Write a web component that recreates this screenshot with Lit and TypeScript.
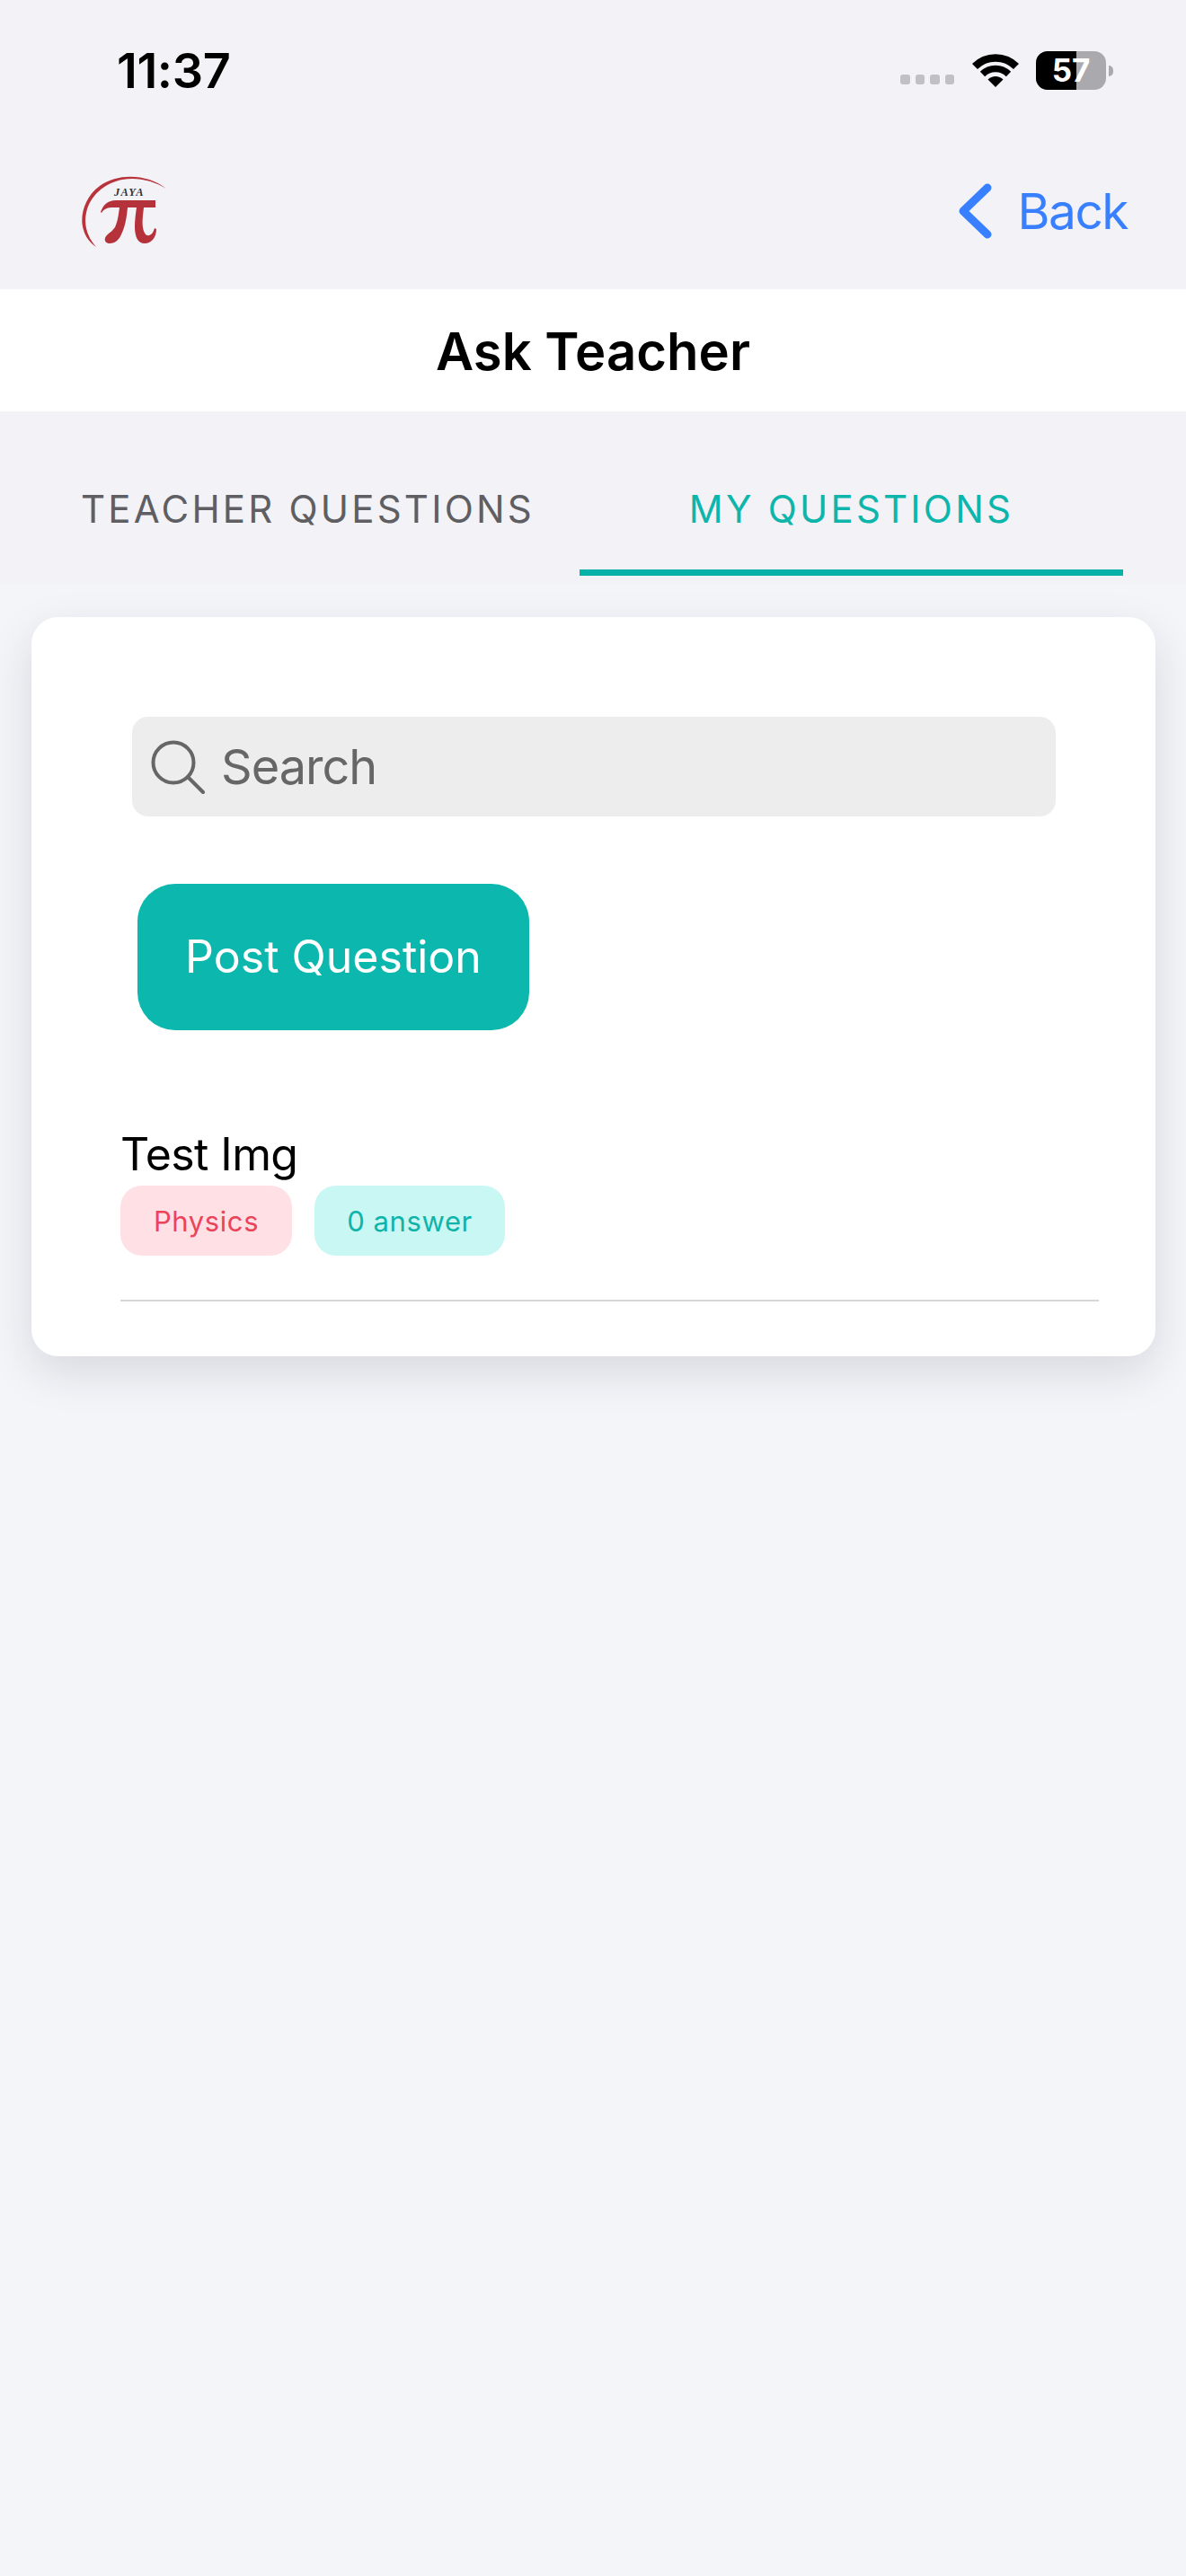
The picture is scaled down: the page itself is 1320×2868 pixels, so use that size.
import { LitElement, html, css } from "lit";
import { customElement } from "lit/decorators.js";

@customElement("app-root")
export class AppRoot extends LitElement {
  static styles = css`
    :host { display: block; width: 1320px; height: 2868px; background: #f4f5f9; font-family: Inter, "Noto Sans", sans-serif; color: #000; overflow: hidden; }
    * { box-sizing: border-box; }
    .top { background: #f2f2f7; height: 322px; }
    .status { height: 156px; display: flex; align-items: center; padding: 0 81px 0 130px; }
    .time { font-size: 54px; font-weight: 600; letter-spacing: -0.4px; line-height: 1; margin-top: 1px; }
    .status-right { margin-left: auto; display: flex; align-items: center; margin-top: 1px; }
    .dots { display: flex; gap: 6px; margin-top: 20px; margin-right: 20px; }
    .dot { width: 10.5px; height: 10.5px; border-radius: 3px; background: #c1c1c4; }
    .wifi { display: block; width: 52px; height: 39px; margin-right: 19px; }
    .battery { position: relative; width: 78px; height: 43px; border-radius: 13px; background: #a9a9ae; overflow: hidden; display: flex; align-items: center; justify-content: center; color: #fff; font-size: 35px; font-weight: 700; line-height: 1; }
    .battery-fill { position: absolute; left: 0; top: 0; bottom: 0; width: 45px; background: #000; }
    .battery-num { position: relative; }
    .nub { width: 5px; height: 12px; margin-left: 3px; background: #a9a9ae; border-radius: 0 6px 6px 0; }
    .nav { height: 166px; display: flex; align-items: center; justify-content: space-between; padding: 0 65px 8px 85px; }
    .logo { display: block; width: 105px; height: 90px; }
    .logo-text { font-family: "Liberation Serif", serif; font-style: italic; font-weight: 700; font-size: 12.5px; letter-spacing: 1.2px; fill: #333; }
    .back { display: flex; align-items: center; gap: 29px; color: #3880ff; font-size: 55px; letter-spacing: -1.5px; line-height: 1; }
    .chev { display: block; width: 38px; height: 62px; }
    .title { height: 136px; padding-top: 2px; background: #fff; display: flex; align-items: center; justify-content: center; font-size: 58px; font-weight: 600; }
    .tabs { height: 192px; background: #f2f2f7; display: flex; padding: 0 70px 0 40px; }
    .tab { flex: 1; display: flex; align-items: flex-start; justify-content: center; padding-top: 88px; height: 183px; font-size: 42px; letter-spacing: 3.2px; color: #5f5f63; line-height: 1; }
    .tab.active { color: #0db5ab; border-bottom: 7px solid #08b2a8; }
    .card { margin: 37px 34px 0 35px; height: 823px; background: #fff; border-radius: 30px; box-shadow: 0 18px 50px rgba(30, 30, 50, 0.13); padding: 111px 111px 0 112px; }
    .search { height: 111px; background: #ededed; border-radius: 18px; display: flex; align-items: center; padding-left: 21px; gap: 18px; color: #666; font-size: 54px; font-weight: 400; letter-spacing: -1px; }
    .search svg { display: block; width: 60px; height: 60px; }
    .btn { margin: 75px 0 0 6px; width: 436px; height: 163px; padding-bottom: 2px; border-radius: 42px; background: #0cb7ae; color: #fff; display: flex; align-items: center; justify-content: center; font-size: 50px; font-weight: 400; }
    .item { margin: 108px -48px 0 -13px; height: 194px; border-bottom: 2px solid #d6d6d9; }
    .item-title { font-size: 50px; line-height: 60px; letter-spacing: -0.6px; }
    .tags { display: flex; gap: 25px; margin-top: 5px; }
    .tag { height: 78px; border-radius: 24px; display: flex; align-items: center; justify-content: center; font-size: 31px; letter-spacing: 0.6px; }
    .tag.red { width: 191px; background: #ffe0e5; color: #eb445a; }
    .tag.teal { width: 212px; background: #c8f7f4; color: #0fb3a9; }
  `;

  render() {
    return html`
      <div class="top">
        <div class="status">
          <div class="time">11:37</div>
          <div class="status-right">
            <div class="dots"><div class="dot"></div><div class="dot"></div><div class="dot"></div><div class="dot"></div></div>
            <svg class="wifi" viewBox="0 0 52 39">
              <path d="M3 15 A32.5 32.5 0 0 1 49 15" fill="none" stroke="#000" stroke-width="8.5"/>
              <path d="M11.5 23.5 A20.5 20.5 0 0 1 40.5 23.5" fill="none" stroke="#000" stroke-width="7.5"/>
              <path d="M26 38 L17.5 29.5 A12 12 0 0 1 34.500 29.5 Z" fill="#000"/>
            </svg>
            <div class="battery"><div class="battery-fill"></div><span class="battery-num">57</span></div>
            <div class="nub"></div>
          </div>
        </div>
        <div class="nav">
          <svg class="logo" viewBox="85 190 105 90">
            <path d="M185 210 C165 194 132 192 111 207 C94 219 88 242 93 256 C95 264 101 271 107 275 C97 264 93 250 96 237 C100 218 116 204 136 200 C153 197 170 201 185 210 Z" fill="#b9333b"/>
            <text class="logo-text" x="127" y="218">JAYA</text>
            <path d="M112 236 C115 228 120 223 129 223 L173 223 L173 231 L160 231 C159 240 158 248 159 253 C160 260 163 263 166 262 C169 261 171 258 172 254 L174 255 C174 265 168 271 161 271 C153 271 150 263 150 252 C150 245 151 238 152 231 L142 231 C141 243 139 253 135 261 C132 268 127 271 122 271 C118 271 116 268 117 265 C118 261 124 259 128 253 C131 247 132 238 133 231 L126 231 C120 231 116 232 113 237 Z" fill="#b5323a"/>
          </svg>
          <div class="back">
            <svg class="chev" viewBox="0 0 38 62">
              <path d="M33 5 L6 31 L33 57" fill="none" stroke="#3880ff" stroke-width="9" stroke-linecap="round" stroke-linejoin="round"/>
            </svg>
            <span>Back</span>
          </div>
        </div>
      </div>
      <div class="title">Ask Teacher</div>
      <div class="tabs">
        <div class="tab">TEACHER QUESTIONS</div>
        <div class="tab active">MY QUESTIONS</div>
      </div>
      <div class="card">
        <div class="search">
          <svg viewBox="0 0 60 60">
            <circle cx="25" cy="25" r="22.500" fill="none" stroke="#666" stroke-width="4"/>
            <path d="M41 41 L58 58" fill="none" stroke="#666" stroke-width="4" stroke-linecap="round"/>
          </svg>
          <span>Search</span>
        </div>
        <div class="btn">Post Question</div>
        <div class="item">
          <div class="item-title">Test Img</div>
          <div class="tags">
            <div class="tag red">Physics</div>
            <div class="tag teal">0 answer</div>
          </div>
        </div>
      </div>
    `;
  }
}
